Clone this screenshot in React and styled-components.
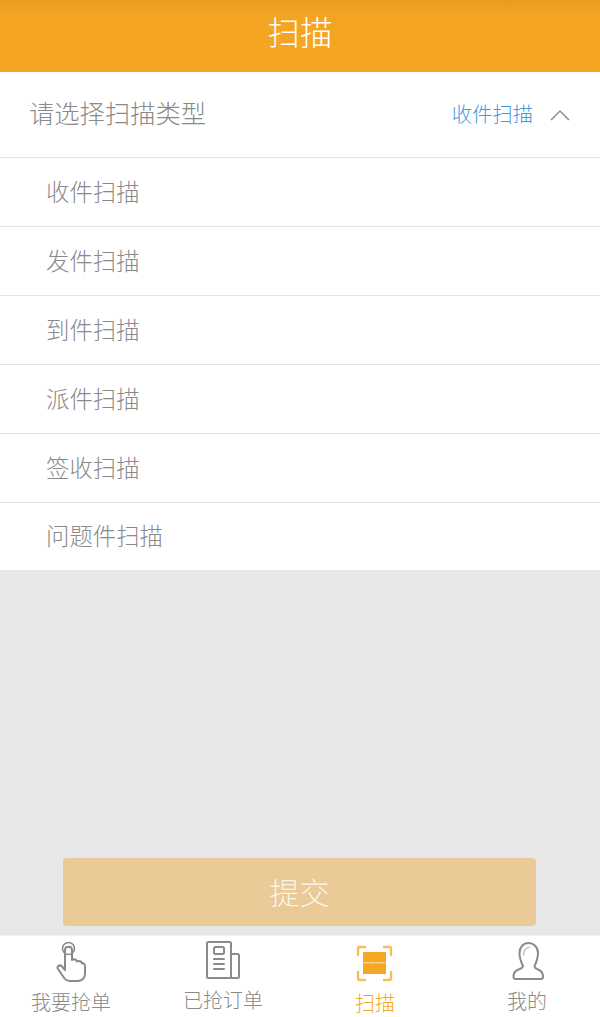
import React from 'react';
import styled, { createGlobalStyle } from 'styled-components';

const GlobalStyle = createGlobalStyle`
  html, body {
    margin: 0;
    padding: 0;
    background: #fff;
  }
  * {
    box-sizing: border-box;
  }
`;

const Page = styled.div`
  width: 600px;
  height: 1017px;
  display: flex;
  flex-direction: column;
  overflow: hidden;
  background: #e7e7e7;
  font-family: "Noto Sans CJK SC", "Liberation Sans", sans-serif;
  font-weight: 300;
`;

const Header = styled.header`
  flex: 0 0 72px;
  display: flex;
  align-items: center;
  justify-content: center;
  padding-bottom: 12px;
  background: linear-gradient(#e89c1f 0, #f4a423 14px, #f5a623 100%);
  color: #fff;
  font-size: 32.5px;
`;

const SelectRow = styled.div`
  flex: 0 0 86px;
  display: flex;
  align-items: center;
  padding: 0 30px 0 29px;
  background: #fff;
  border-bottom: 1px solid #e4e4e4;
  color: #8a8a8a;
  font-size: 25.3px;
`;

const SelectTitle = styled.span`
  margin-bottom: 5px;
`;

const SelectValue = styled.span`
  margin-left: auto;
  margin-right: 17px;
  margin-bottom: 3px;
  color: #3d9be4;
  font-size: 20.3px;
`;

const OptionList = styled.ul`
  list-style: none;
  margin: 0;
  padding: 0;
  background: #fff;
`;

const Option = styled.li`
  height: 69px;
  display: flex;
  align-items: center;
  padding: 0 0 3px 46px;
  border-bottom: 1px solid #e4e4e4;
  color: #8a8a8a;
  font-size: 23.4px;

  &:last-child {
    height: 67px;
    border-bottom: 0;
  }
`;

const Content = styled.main`
  flex: 1;
  display: flex;
  align-items: flex-end;
  justify-content: center;
  padding: 0 1px 9px 0;
`;

const SubmitButton = styled.button`
  width: 473px;
  height: 68px;
  padding: 0 0 3px;
  border: 0;
  border-radius: 4px;
  background: #eaca97;
  color: #fbf3e6;
  font-family: inherit;
  font-weight: 300;
  font-size: 30px;
`;

const TabBar = styled.nav`
  flex: 0 0 81px;
  display: grid;
  grid-template-columns: repeat(4, 152px);
  margin-left: -5px;
  background: #fff;
  border-top: 1px solid #f0f0f0;
`;

const Tab = styled.div`
  display: flex;
  flex-direction: column;
  align-items: center;
  padding-top: 1px;
  color: ${(props) => (props.$active ? '#f5a623' : '#8a8a8a')};
`;

const TabIcon = styled.svg`
  display: block;
  flex: none;
  width: 48px;
  height: 48px;
  fill: none;
  stroke: currentColor;
  stroke-width: 2;
  stroke-linecap: round;
  stroke-linejoin: round;
`;

const TabLabel = styled.span`
  margin-top: ${(props) => props.$gap}px;
  font-size: 20px;
  line-height: 29px;
`;

const Chevron = () => (
  <svg width="20" height="12" viewBox="0 0 20 12" fill="none" stroke="#8e8e8e" strokeWidth="1.5">
    <path d="M1 11 10 2l9 9" />
  </svg>
);

const HandIcon = () => (
  <TabIcon viewBox="0 0 48 48">
    <circle cx="21.5" cy="11.5" r="6" strokeWidth="1.6" />
    <path d="M18 13c0-4.500 7-4.500 7 0v10c2-1.500 4.500-.5 5 1.500 2-1 4.500-.2 5 2 1.500-.5 3 .5 3 2.500v8c0 4-3 7-7.500 7h-8c-2 0-3.800-1-5-2.500L11 32c-1.500-2.500 1.500-5 4-2.500l3 3.500z" />
  </TabIcon>
);

const NewsIcon = () => (
  <TabIcon viewBox="0 0 48 48">
    <path d="M32 17h6.500c1 0 1.500.5 1.500 1.500v21c0 1-.5 1.500-1.500 1.500h-29C8.500 41 8 40.500 8 39.500v-33C8 5.500 8.500 5 9.500 5h21c1 0 1.500.5 1.500 1.500V41" />
    <rect x="15" y="10" width="10" height="7" rx="1.5" />
    <path d="M15 22h10M15 27h10M15 32h10" />
  </TabIcon>
);

const ScanStroke = styled.path`
  stroke: #f6bd5c;
  stroke-width: 2.4;
`;

const ScanIcon = () => (
  <TabIcon viewBox="0 0 48 48">
    <ScanStroke d="M14 10H8.500C7.500 10 7 10.500 7 11.500V18M33 10h5.500c1 0 1.500.5 1.500 1.500V18M14 43H8.500C7.500 43 7 42.500 7 41.500V35M33 43h5.500c1 0 1.500-.5 1.500-1.500V35" />
    <rect x="12" y="15" width="23" height="22" fill="currentColor" stroke="none" />
    <path d="M12.500 25.800h22" stroke="#fff" strokeWidth="1" strokeDasharray="2 1" strokeLinecap="butt" />
  </TabIcon>
);

const UserIcon = () => (
  <TabIcon viewBox="0 0 48 48">
    <path d="M20 29C18 25 16.500 20 16.500 16 16.500 10 20.500 6 25.500 6S35 10 35 16c0 4-1.500 9-3.500 13 0 2 2 3 4.500 4 3 1.300 4 3.500 4 6.500 0 1.500-1 2.500-2 2.500H12.500c-1 0-2-1-2-2.500 0-3 1-5.200 4-6.500 2.500-1 5.500-2 5.500-4z" />
    <path d="M20.500 18c0-4 2-7 6-8" stroke="#c4c4c4" strokeWidth="1.5" />
  </TabIcon>
);

const options = ['收件扫描', '发件扫描', '到件扫描', '派件扫描', '签收扫描', '问题件扫描'];

const tabs = [
  { label: '我要抢单', Icon: HandIcon, gap: 2 },
  { label: '已抢订单', Icon: NewsIcon, gap: 0 },
  { label: '扫描', Icon: ScanIcon, gap: 3, active: true },
  { label: '我的', Icon: UserIcon, gap: 1 },
];

const App = () => {
  return (
    <Page>
      <GlobalStyle />
      <Header>扫描</Header>
      <SelectRow>
        <SelectTitle>请选择扫描类型</SelectTitle>
        <SelectValue>收件扫描</SelectValue>
        <Chevron />
      </SelectRow>
      <OptionList>
        {options.map((option) => (
          <Option key={option}>{option}</Option>
        ))}
      </OptionList>
      <Content>
        <SubmitButton>提交</SubmitButton>
      </Content>
      <TabBar>
        {tabs.map(({ label, Icon, gap, active }) => (
          <Tab key={label} $active={active}>
            <Icon />
            <TabLabel $gap={gap}>{label}</TabLabel>
          </Tab>
        ))}
      </TabBar>
    </Page>
  );
};

export default App;
